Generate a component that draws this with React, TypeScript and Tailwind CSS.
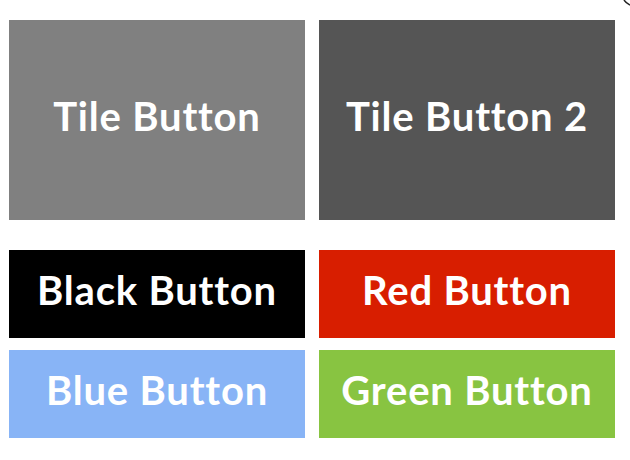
import React from 'react'

const tiles = [
  { label: "Tile Button", bg: "bg-[#808080]" },
  { label: "Tile Button 2", bg: "bg-[#555555]" },
]

const buttons = [
  { label: "Black Button", bg: "bg-black" },
  { label: "Red Button", bg: "bg-[#d81e00]" },
  { label: "Blue Button", bg: "bg-[#88b4f6]" },
  { label: "Green Button", bg: "bg-[#88c441]" },
]

const App = () => {
  return (
    <div className="relative w-[630px] h-[460px] bg-white pt-[20px] pl-[9px] font-['Lato',sans-serif] font-bold text-white">
      <div className="grid grid-cols-[296px_296px] gap-x-[14px]">
        {tiles.map(t => (
          <button key={t.label} className={`${t.bg} h-[200px] pb-[8px] flex items-center justify-center text-[40px] tracking-[0.8px] leading-none`}>
            {t.label}
          </button>
        ))}
      </div>
      <div className="grid grid-cols-[296px_296px] gap-x-[14px] gap-y-[12px] mt-[30px]">
        {buttons.map(b => (
          <button key={b.label} className={`${b.bg} h-[88px] pb-[8px] flex items-center justify-center text-[40px] tracking-[0.8px] leading-none`}>
            {b.label}
          </button>
        ))}
      </div>
      <svg className="absolute top-0 right-0" width="8" height="6" viewBox="0 0 8 6">
        <path d="M2 0 Q4 3 8 5" stroke="#222" strokeWidth="1.5" fill="none" />
      </svg>
    </div>
  )
}

export default App;
